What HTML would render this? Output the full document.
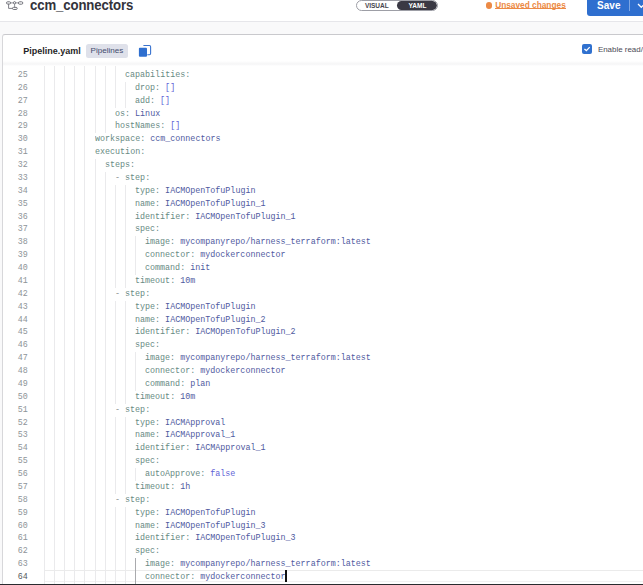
<!DOCTYPE html>
<html><head><meta charset="utf-8">
<style>
html,body{margin:0;padding:0}
body{width:643px;height:585px;overflow:hidden;position:relative;background:#fff;font-family:"Liberation Sans",sans-serif}
.abs{position:absolute}
#hdr{position:absolute;left:0;top:0;width:643px;height:21px;background:#fff;border-bottom:1px solid #e6e6ea}
#sub{position:absolute;left:0;top:22px;width:643px;height:600px;background:#f9f9fa}
#title{position:absolute;left:30.3px;top:-3.2px;font-size:14.2px;letter-spacing:-0.13px;transform:scaleX(0.9296);transform-origin:0 0;font-weight:bold;color:#33333b;line-height:17px;white-space:nowrap}
#tog{position:absolute;left:356px;top:0px;width:80px;height:9px;border:0.8px solid #9d9ea6;border-radius:6px;background:#fff;overflow:hidden}
#tog .on{position:absolute;right:0;top:0;width:40px;height:9px;background:#3a3944;border-radius:6px}
#tog span{position:absolute;top:0.05px;font-size:6.5px;font-weight:bold;line-height:9px}
#dot{position:absolute;left:485.9px;top:2.3px;width:6.6px;height:6.6px;border-radius:50%;background:#ec8a45}
#uns{position:absolute;left:495.2px;top:0.1px;font-size:8.3px;font-weight:bold;color:#ec8a45;line-height:10px;white-space:nowrap}
#unl{position:absolute;left:495.4px;top:8.4px;width:70.4px;height:0.9px;background:#ec8a45}
#save{position:absolute;left:587px;top:-4px;width:70px;height:19.5px;border-radius:3px;background:#2f6fcf}
#save span{position:absolute;left:10.1px;top:4.1px;font-size:10px;font-weight:bold;color:#fff;line-height:11px}
#save i{position:absolute;left:42px;top:4px;width:1px;height:10.8px;background:#7ea6e4}
#card{position:absolute;left:2px;top:33.8px;width:700px;height:600px;border:1px solid #d7d7da;border-top-color:#c9c9cd;border-radius:3px;background:#fff}
#pyaml{position:absolute;left:23.2px;top:44.78px;font-size:9px;font-weight:bold;color:#1f1f26;line-height:12px;white-space:nowrap}
#tag{position:absolute;left:86px;top:44.3px;width:42px;height:13.3px;border-radius:2.5px;background:#dfe1ea}
#tag span{position:absolute;left:4.5px;top:0.1px;font-size:8.1px;color:#444c6e;line-height:13.3px;white-space:nowrap}
#chk{position:absolute;left:582.2px;top:44.3px;width:10px;height:10px;border-radius:2px;background:#3071cf}
#enr{position:absolute;left:597.9px;top:44.6px;font-size:7.95px;color:#4a4b55;line-height:10px;white-space:nowrap}
#edtop{position:absolute;left:3px;top:60.5px;width:643px;height:5.5px;background:linear-gradient(#fff,#f5f5f6 60%,#fff)}
.n{position:absolute;left:0;width:27.7px;text-align:right;font-family:"Liberation Mono",monospace;color:#8d9498;transform-origin:27.7px 0}
.n.cur{color:#545a5e}
.l{position:absolute;font-family:"Liberation Mono",monospace;white-space:pre;transform-origin:0 0}
.d{color:#8a9090}
.k{color:#678a83}
.v{color:#4f5aa0}
.b{color:#5e62d6}
.g{position:absolute;width:1px;background:#eaeaec}
.ga{background:#a9aaad}
.curline{position:absolute;left:44px;width:643px;height:12.6px;border-top:1px solid #ebebeb;border-bottom:1px solid #f1f1f1;box-sizing:border-box}
.cursor{position:absolute;width:1.2px;height:12px;background:#111}
#bot{position:absolute;left:0;top:583.5px;width:643px;height:2px;background:#2a2b2f}

.l,.n{height:12.87px;line-height:12.87px}
.l{font-size:9.30px;transform:scaleX(0.8996)}
.n{font-size:9.8px;transform:scaleX(0.8503)}
.g{height:12.97px}

</style></head><body>
<div id="hdr">
  <svg class="abs" style="left:0;top:0" width="28" height="13" viewBox="0 0 28 13">
    <g fill="none" stroke="#707179" stroke-width="1">
      <rect x="6.5" y="1.8" width="4.1" height="2.2" rx="1.1"/>
      <circle cx="14.55" cy="2.8" r="1.15"/>
      <rect x="18.4" y="1.8" width="4.4" height="2.4" rx="1.2"/>
      <rect x="12.5" y="7.35" width="4.7" height="2.1" rx="1.05"/>
      <path d="M8.6 4V8.4H12.5" stroke-width="0.9"/><path d="M10.6 2.9H13.4M15.7 2.9H18.4M14.6 3.95V7.35" stroke-width="0.75"/>
    </g>
  </svg>
  <div id="title">ccm_connectors</div>
  <div id="tog"><div class="on"></div><span style="left:7.9px;color:#46464e">VISUAL</span><span style="left:51.6px;color:#fff">YAML</span></div>
  <div id="dot"></div><div id="uns">Unsaved changes</div><div id="unl"></div>
  <div id="save"><span>Save</span><i></i>
    <svg class="abs" style="left:49.6px;top:6.6px" width="9" height="6" viewBox="0 0 9 6"><path d="M1 1.0L4.3 4.3L7.6 1.0" fill="none" stroke="#fff" stroke-width="1.25"/></svg>
  </div>
</div>
<div id="sub"></div>
<div id="card"></div>
<div id="pyaml">Pipeline.yaml</div>
<div id="tag"><span>Pipelines</span></div>
<svg class="abs" style="left:137px;top:44px" width="16" height="14" viewBox="0 0 16 14">
  <path d="M6.4 1.5H12.4Q13.6 1.5 13.6 2.7V9.6Q13.6 10.8 12.4 10.8H10.3" fill="none" stroke="#3a73cf" stroke-width="1.1"/>
  <rect x="1.9" y="3.8" width="8.1" height="8.9" rx="1" fill="#2f6fcf"/>
</svg>
<div id="chk"><svg class="abs" style="left:0;top:0" width="10" height="10" viewBox="0 0 10 10"><path d="M2.4 4.9L4.4 6.6L7.7 3.1" fill="none" stroke="#fff" stroke-width="1.3"/></svg></div>
<div id="enr">Enable read/only</div>
<div id="edtop"></div>
<div class="curline" style="top:569.71px"></div><div class="cursor" style="top:570.11px;left:285.46px"></div>
<i class="g" style="left:43.90px;top:66.20px;height:15.77px"></i>
<i class="g" style="left:54.03px;top:66.20px;height:15.77px"></i>
<i class="g" style="left:64.16px;top:66.20px;height:15.77px"></i>
<i class="g" style="left:74.29px;top:66.20px;height:15.77px"></i>
<i class="g" style="left:84.42px;top:66.20px;height:15.77px"></i>
<i class="g" style="left:94.55px;top:66.20px;height:15.77px"></i>
<i class="g" style="left:104.68px;top:66.20px;height:15.77px"></i>
<i class="g" style="left:114.81px;top:66.20px;height:15.77px"></i>
<i class="g" style="left:43.90px;top:81.87px"></i>
<i class="g" style="left:54.03px;top:81.87px"></i>
<i class="g" style="left:64.16px;top:81.87px"></i>
<i class="g" style="left:74.29px;top:81.87px"></i>
<i class="g" style="left:84.42px;top:81.87px"></i>
<i class="g" style="left:94.55px;top:81.87px"></i>
<i class="g" style="left:104.68px;top:81.87px"></i>
<i class="g" style="left:114.81px;top:81.87px"></i>
<i class="g" style="left:124.94px;top:81.87px"></i>
<i class="g" style="left:43.90px;top:94.74px"></i>
<i class="g" style="left:54.03px;top:94.74px"></i>
<i class="g" style="left:64.16px;top:94.74px"></i>
<i class="g" style="left:74.29px;top:94.74px"></i>
<i class="g" style="left:84.42px;top:94.74px"></i>
<i class="g" style="left:94.55px;top:94.74px"></i>
<i class="g" style="left:104.68px;top:94.74px"></i>
<i class="g" style="left:114.81px;top:94.74px"></i>
<i class="g" style="left:124.94px;top:94.74px"></i>
<i class="g" style="left:43.90px;top:107.62px"></i>
<i class="g" style="left:54.03px;top:107.62px"></i>
<i class="g" style="left:64.16px;top:107.62px"></i>
<i class="g" style="left:74.29px;top:107.62px"></i>
<i class="g" style="left:84.42px;top:107.62px"></i>
<i class="g" style="left:94.55px;top:107.62px"></i>
<i class="g" style="left:104.68px;top:107.62px"></i>
<i class="g" style="left:43.90px;top:120.49px"></i>
<i class="g" style="left:54.03px;top:120.49px"></i>
<i class="g" style="left:64.16px;top:120.49px"></i>
<i class="g" style="left:74.29px;top:120.49px"></i>
<i class="g" style="left:84.42px;top:120.49px"></i>
<i class="g" style="left:94.55px;top:120.49px"></i>
<i class="g" style="left:104.68px;top:120.49px"></i>
<i class="g" style="left:43.90px;top:133.36px"></i>
<i class="g" style="left:54.03px;top:133.36px"></i>
<i class="g" style="left:64.16px;top:133.36px"></i>
<i class="g" style="left:74.29px;top:133.36px"></i>
<i class="g" style="left:84.42px;top:133.36px"></i>
<i class="g" style="left:43.90px;top:146.23px"></i>
<i class="g" style="left:54.03px;top:146.23px"></i>
<i class="g" style="left:64.16px;top:146.23px"></i>
<i class="g" style="left:74.29px;top:146.23px"></i>
<i class="g" style="left:84.42px;top:146.23px"></i>
<i class="g" style="left:43.90px;top:159.10px"></i>
<i class="g" style="left:54.03px;top:159.10px"></i>
<i class="g" style="left:64.16px;top:159.10px"></i>
<i class="g" style="left:74.29px;top:159.10px"></i>
<i class="g" style="left:84.42px;top:159.10px"></i>
<i class="g" style="left:94.55px;top:159.10px"></i>
<i class="g" style="left:43.90px;top:171.98px"></i>
<i class="g" style="left:54.03px;top:171.98px"></i>
<i class="g" style="left:64.16px;top:171.98px"></i>
<i class="g" style="left:74.29px;top:171.98px"></i>
<i class="g" style="left:84.42px;top:171.98px"></i>
<i class="g" style="left:94.55px;top:171.98px"></i>
<i class="g" style="left:104.68px;top:171.98px"></i>
<i class="g" style="left:43.90px;top:184.85px"></i>
<i class="g" style="left:54.03px;top:184.85px"></i>
<i class="g" style="left:64.16px;top:184.85px"></i>
<i class="g" style="left:74.29px;top:184.85px"></i>
<i class="g" style="left:84.42px;top:184.85px"></i>
<i class="g" style="left:94.55px;top:184.85px"></i>
<i class="g" style="left:104.68px;top:184.85px"></i>
<i class="g" style="left:114.81px;top:184.85px"></i>
<i class="g" style="left:124.94px;top:184.85px"></i>
<i class="g" style="left:43.90px;top:197.72px"></i>
<i class="g" style="left:54.03px;top:197.72px"></i>
<i class="g" style="left:64.16px;top:197.72px"></i>
<i class="g" style="left:74.29px;top:197.72px"></i>
<i class="g" style="left:84.42px;top:197.72px"></i>
<i class="g" style="left:94.55px;top:197.72px"></i>
<i class="g" style="left:104.68px;top:197.72px"></i>
<i class="g" style="left:114.81px;top:197.72px"></i>
<i class="g" style="left:124.94px;top:197.72px"></i>
<i class="g" style="left:43.90px;top:210.59px"></i>
<i class="g" style="left:54.03px;top:210.59px"></i>
<i class="g" style="left:64.16px;top:210.59px"></i>
<i class="g" style="left:74.29px;top:210.59px"></i>
<i class="g" style="left:84.42px;top:210.59px"></i>
<i class="g" style="left:94.55px;top:210.59px"></i>
<i class="g" style="left:104.68px;top:210.59px"></i>
<i class="g" style="left:114.81px;top:210.59px"></i>
<i class="g" style="left:124.94px;top:210.59px"></i>
<i class="g" style="left:43.90px;top:223.46px"></i>
<i class="g" style="left:54.03px;top:223.46px"></i>
<i class="g" style="left:64.16px;top:223.46px"></i>
<i class="g" style="left:74.29px;top:223.46px"></i>
<i class="g" style="left:84.42px;top:223.46px"></i>
<i class="g" style="left:94.55px;top:223.46px"></i>
<i class="g" style="left:104.68px;top:223.46px"></i>
<i class="g" style="left:114.81px;top:223.46px"></i>
<i class="g" style="left:124.94px;top:223.46px"></i>
<i class="g" style="left:43.90px;top:236.34px"></i>
<i class="g" style="left:54.03px;top:236.34px"></i>
<i class="g" style="left:64.16px;top:236.34px"></i>
<i class="g" style="left:74.29px;top:236.34px"></i>
<i class="g" style="left:84.42px;top:236.34px"></i>
<i class="g" style="left:94.55px;top:236.34px"></i>
<i class="g" style="left:104.68px;top:236.34px"></i>
<i class="g" style="left:114.81px;top:236.34px"></i>
<i class="g" style="left:124.94px;top:236.34px"></i>
<i class="g" style="left:135.07px;top:236.34px"></i>
<i class="g" style="left:43.90px;top:249.21px"></i>
<i class="g" style="left:54.03px;top:249.21px"></i>
<i class="g" style="left:64.16px;top:249.21px"></i>
<i class="g" style="left:74.29px;top:249.21px"></i>
<i class="g" style="left:84.42px;top:249.21px"></i>
<i class="g" style="left:94.55px;top:249.21px"></i>
<i class="g" style="left:104.68px;top:249.21px"></i>
<i class="g" style="left:114.81px;top:249.21px"></i>
<i class="g" style="left:124.94px;top:249.21px"></i>
<i class="g" style="left:135.07px;top:249.21px"></i>
<i class="g" style="left:43.90px;top:262.08px"></i>
<i class="g" style="left:54.03px;top:262.08px"></i>
<i class="g" style="left:64.16px;top:262.08px"></i>
<i class="g" style="left:74.29px;top:262.08px"></i>
<i class="g" style="left:84.42px;top:262.08px"></i>
<i class="g" style="left:94.55px;top:262.08px"></i>
<i class="g" style="left:104.68px;top:262.08px"></i>
<i class="g" style="left:114.81px;top:262.08px"></i>
<i class="g" style="left:124.94px;top:262.08px"></i>
<i class="g" style="left:135.07px;top:262.08px"></i>
<i class="g" style="left:43.90px;top:274.95px"></i>
<i class="g" style="left:54.03px;top:274.95px"></i>
<i class="g" style="left:64.16px;top:274.95px"></i>
<i class="g" style="left:74.29px;top:274.95px"></i>
<i class="g" style="left:84.42px;top:274.95px"></i>
<i class="g" style="left:94.55px;top:274.95px"></i>
<i class="g" style="left:104.68px;top:274.95px"></i>
<i class="g" style="left:114.81px;top:274.95px"></i>
<i class="g" style="left:124.94px;top:274.95px"></i>
<i class="g" style="left:43.90px;top:287.82px"></i>
<i class="g" style="left:54.03px;top:287.82px"></i>
<i class="g" style="left:64.16px;top:287.82px"></i>
<i class="g" style="left:74.29px;top:287.82px"></i>
<i class="g" style="left:84.42px;top:287.82px"></i>
<i class="g" style="left:94.55px;top:287.82px"></i>
<i class="g" style="left:104.68px;top:287.82px"></i>
<i class="g" style="left:43.90px;top:300.70px"></i>
<i class="g" style="left:54.03px;top:300.70px"></i>
<i class="g" style="left:64.16px;top:300.70px"></i>
<i class="g" style="left:74.29px;top:300.70px"></i>
<i class="g" style="left:84.42px;top:300.70px"></i>
<i class="g" style="left:94.55px;top:300.70px"></i>
<i class="g" style="left:104.68px;top:300.70px"></i>
<i class="g" style="left:114.81px;top:300.70px"></i>
<i class="g" style="left:124.94px;top:300.70px"></i>
<i class="g" style="left:43.90px;top:313.57px"></i>
<i class="g" style="left:54.03px;top:313.57px"></i>
<i class="g" style="left:64.16px;top:313.57px"></i>
<i class="g" style="left:74.29px;top:313.57px"></i>
<i class="g" style="left:84.42px;top:313.57px"></i>
<i class="g" style="left:94.55px;top:313.57px"></i>
<i class="g" style="left:104.68px;top:313.57px"></i>
<i class="g" style="left:114.81px;top:313.57px"></i>
<i class="g" style="left:124.94px;top:313.57px"></i>
<i class="g" style="left:43.90px;top:326.44px"></i>
<i class="g" style="left:54.03px;top:326.44px"></i>
<i class="g" style="left:64.16px;top:326.44px"></i>
<i class="g" style="left:74.29px;top:326.44px"></i>
<i class="g" style="left:84.42px;top:326.44px"></i>
<i class="g" style="left:94.55px;top:326.44px"></i>
<i class="g" style="left:104.68px;top:326.44px"></i>
<i class="g" style="left:114.81px;top:326.44px"></i>
<i class="g" style="left:124.94px;top:326.44px"></i>
<i class="g" style="left:43.90px;top:339.31px"></i>
<i class="g" style="left:54.03px;top:339.31px"></i>
<i class="g" style="left:64.16px;top:339.31px"></i>
<i class="g" style="left:74.29px;top:339.31px"></i>
<i class="g" style="left:84.42px;top:339.31px"></i>
<i class="g" style="left:94.55px;top:339.31px"></i>
<i class="g" style="left:104.68px;top:339.31px"></i>
<i class="g" style="left:114.81px;top:339.31px"></i>
<i class="g" style="left:124.94px;top:339.31px"></i>
<i class="g" style="left:43.90px;top:352.18px"></i>
<i class="g" style="left:54.03px;top:352.18px"></i>
<i class="g" style="left:64.16px;top:352.18px"></i>
<i class="g" style="left:74.29px;top:352.18px"></i>
<i class="g" style="left:84.42px;top:352.18px"></i>
<i class="g" style="left:94.55px;top:352.18px"></i>
<i class="g" style="left:104.68px;top:352.18px"></i>
<i class="g" style="left:114.81px;top:352.18px"></i>
<i class="g" style="left:124.94px;top:352.18px"></i>
<i class="g" style="left:135.07px;top:352.18px"></i>
<i class="g" style="left:43.90px;top:365.06px"></i>
<i class="g" style="left:54.03px;top:365.06px"></i>
<i class="g" style="left:64.16px;top:365.06px"></i>
<i class="g" style="left:74.29px;top:365.06px"></i>
<i class="g" style="left:84.42px;top:365.06px"></i>
<i class="g" style="left:94.55px;top:365.06px"></i>
<i class="g" style="left:104.68px;top:365.06px"></i>
<i class="g" style="left:114.81px;top:365.06px"></i>
<i class="g" style="left:124.94px;top:365.06px"></i>
<i class="g" style="left:135.07px;top:365.06px"></i>
<i class="g" style="left:43.90px;top:377.93px"></i>
<i class="g" style="left:54.03px;top:377.93px"></i>
<i class="g" style="left:64.16px;top:377.93px"></i>
<i class="g" style="left:74.29px;top:377.93px"></i>
<i class="g" style="left:84.42px;top:377.93px"></i>
<i class="g" style="left:94.55px;top:377.93px"></i>
<i class="g" style="left:104.68px;top:377.93px"></i>
<i class="g" style="left:114.81px;top:377.93px"></i>
<i class="g" style="left:124.94px;top:377.93px"></i>
<i class="g" style="left:135.07px;top:377.93px"></i>
<i class="g" style="left:43.90px;top:390.80px"></i>
<i class="g" style="left:54.03px;top:390.80px"></i>
<i class="g" style="left:64.16px;top:390.80px"></i>
<i class="g" style="left:74.29px;top:390.80px"></i>
<i class="g" style="left:84.42px;top:390.80px"></i>
<i class="g" style="left:94.55px;top:390.80px"></i>
<i class="g" style="left:104.68px;top:390.80px"></i>
<i class="g" style="left:114.81px;top:390.80px"></i>
<i class="g" style="left:124.94px;top:390.80px"></i>
<i class="g" style="left:43.90px;top:403.67px"></i>
<i class="g" style="left:54.03px;top:403.67px"></i>
<i class="g" style="left:64.16px;top:403.67px"></i>
<i class="g" style="left:74.29px;top:403.67px"></i>
<i class="g" style="left:84.42px;top:403.67px"></i>
<i class="g" style="left:94.55px;top:403.67px"></i>
<i class="g" style="left:104.68px;top:403.67px"></i>
<i class="g" style="left:43.90px;top:416.54px"></i>
<i class="g" style="left:54.03px;top:416.54px"></i>
<i class="g" style="left:64.16px;top:416.54px"></i>
<i class="g" style="left:74.29px;top:416.54px"></i>
<i class="g" style="left:84.42px;top:416.54px"></i>
<i class="g" style="left:94.55px;top:416.54px"></i>
<i class="g" style="left:104.68px;top:416.54px"></i>
<i class="g" style="left:114.81px;top:416.54px"></i>
<i class="g" style="left:124.94px;top:416.54px"></i>
<i class="g" style="left:43.90px;top:429.42px"></i>
<i class="g" style="left:54.03px;top:429.42px"></i>
<i class="g" style="left:64.16px;top:429.42px"></i>
<i class="g" style="left:74.29px;top:429.42px"></i>
<i class="g" style="left:84.42px;top:429.42px"></i>
<i class="g" style="left:94.55px;top:429.42px"></i>
<i class="g" style="left:104.68px;top:429.42px"></i>
<i class="g" style="left:114.81px;top:429.42px"></i>
<i class="g" style="left:124.94px;top:429.42px"></i>
<i class="g" style="left:43.90px;top:442.29px"></i>
<i class="g" style="left:54.03px;top:442.29px"></i>
<i class="g" style="left:64.16px;top:442.29px"></i>
<i class="g" style="left:74.29px;top:442.29px"></i>
<i class="g" style="left:84.42px;top:442.29px"></i>
<i class="g" style="left:94.55px;top:442.29px"></i>
<i class="g" style="left:104.68px;top:442.29px"></i>
<i class="g" style="left:114.81px;top:442.29px"></i>
<i class="g" style="left:124.94px;top:442.29px"></i>
<i class="g" style="left:43.90px;top:455.16px"></i>
<i class="g" style="left:54.03px;top:455.16px"></i>
<i class="g" style="left:64.16px;top:455.16px"></i>
<i class="g" style="left:74.29px;top:455.16px"></i>
<i class="g" style="left:84.42px;top:455.16px"></i>
<i class="g" style="left:94.55px;top:455.16px"></i>
<i class="g" style="left:104.68px;top:455.16px"></i>
<i class="g" style="left:114.81px;top:455.16px"></i>
<i class="g" style="left:124.94px;top:455.16px"></i>
<i class="g" style="left:43.90px;top:468.03px"></i>
<i class="g" style="left:54.03px;top:468.03px"></i>
<i class="g" style="left:64.16px;top:468.03px"></i>
<i class="g" style="left:74.29px;top:468.03px"></i>
<i class="g" style="left:84.42px;top:468.03px"></i>
<i class="g" style="left:94.55px;top:468.03px"></i>
<i class="g" style="left:104.68px;top:468.03px"></i>
<i class="g" style="left:114.81px;top:468.03px"></i>
<i class="g" style="left:124.94px;top:468.03px"></i>
<i class="g" style="left:135.07px;top:468.03px"></i>
<i class="g" style="left:43.90px;top:480.90px"></i>
<i class="g" style="left:54.03px;top:480.90px"></i>
<i class="g" style="left:64.16px;top:480.90px"></i>
<i class="g" style="left:74.29px;top:480.90px"></i>
<i class="g" style="left:84.42px;top:480.90px"></i>
<i class="g" style="left:94.55px;top:480.90px"></i>
<i class="g" style="left:104.68px;top:480.90px"></i>
<i class="g" style="left:114.81px;top:480.90px"></i>
<i class="g" style="left:124.94px;top:480.90px"></i>
<i class="g" style="left:43.90px;top:493.78px"></i>
<i class="g" style="left:54.03px;top:493.78px"></i>
<i class="g" style="left:64.16px;top:493.78px"></i>
<i class="g" style="left:74.29px;top:493.78px"></i>
<i class="g" style="left:84.42px;top:493.78px"></i>
<i class="g" style="left:94.55px;top:493.78px"></i>
<i class="g" style="left:104.68px;top:493.78px"></i>
<i class="g" style="left:43.90px;top:506.65px"></i>
<i class="g" style="left:54.03px;top:506.65px"></i>
<i class="g" style="left:64.16px;top:506.65px"></i>
<i class="g" style="left:74.29px;top:506.65px"></i>
<i class="g" style="left:84.42px;top:506.65px"></i>
<i class="g" style="left:94.55px;top:506.65px"></i>
<i class="g" style="left:104.68px;top:506.65px"></i>
<i class="g" style="left:114.81px;top:506.65px"></i>
<i class="g" style="left:124.94px;top:506.65px"></i>
<i class="g" style="left:43.90px;top:519.52px"></i>
<i class="g" style="left:54.03px;top:519.52px"></i>
<i class="g" style="left:64.16px;top:519.52px"></i>
<i class="g" style="left:74.29px;top:519.52px"></i>
<i class="g" style="left:84.42px;top:519.52px"></i>
<i class="g" style="left:94.55px;top:519.52px"></i>
<i class="g" style="left:104.68px;top:519.52px"></i>
<i class="g" style="left:114.81px;top:519.52px"></i>
<i class="g" style="left:124.94px;top:519.52px"></i>
<i class="g" style="left:43.90px;top:532.39px"></i>
<i class="g" style="left:54.03px;top:532.39px"></i>
<i class="g" style="left:64.16px;top:532.39px"></i>
<i class="g" style="left:74.29px;top:532.39px"></i>
<i class="g" style="left:84.42px;top:532.39px"></i>
<i class="g" style="left:94.55px;top:532.39px"></i>
<i class="g" style="left:104.68px;top:532.39px"></i>
<i class="g" style="left:114.81px;top:532.39px"></i>
<i class="g" style="left:124.94px;top:532.39px"></i>
<i class="g" style="left:43.90px;top:545.26px"></i>
<i class="g" style="left:54.03px;top:545.26px"></i>
<i class="g" style="left:64.16px;top:545.26px"></i>
<i class="g" style="left:74.29px;top:545.26px"></i>
<i class="g" style="left:84.42px;top:545.26px"></i>
<i class="g" style="left:94.55px;top:545.26px"></i>
<i class="g" style="left:104.68px;top:545.26px"></i>
<i class="g" style="left:114.81px;top:545.26px"></i>
<i class="g" style="left:124.94px;top:545.26px"></i>
<i class="g" style="left:43.90px;top:558.14px"></i>
<i class="g" style="left:54.03px;top:558.14px"></i>
<i class="g" style="left:64.16px;top:558.14px"></i>
<i class="g" style="left:74.29px;top:558.14px"></i>
<i class="g" style="left:84.42px;top:558.14px"></i>
<i class="g" style="left:94.55px;top:558.14px"></i>
<i class="g" style="left:104.68px;top:558.14px"></i>
<i class="g" style="left:114.81px;top:558.14px"></i>
<i class="g" style="left:124.94px;top:558.14px"></i>
<i class="g ga" style="left:135.07px;top:558.14px"></i>
<i class="g" style="left:43.90px;top:571.01px"></i>
<i class="g" style="left:54.03px;top:571.01px"></i>
<i class="g" style="left:64.16px;top:571.01px"></i>
<i class="g" style="left:74.29px;top:571.01px"></i>
<i class="g" style="left:84.42px;top:571.01px"></i>
<i class="g" style="left:94.55px;top:571.01px"></i>
<i class="g" style="left:104.68px;top:571.01px"></i>
<i class="g" style="left:114.81px;top:571.01px"></i>
<i class="g" style="left:124.94px;top:571.01px"></i>
<i class="g ga" style="left:135.07px;top:571.01px"></i>
<div class="n" style="top:69.00px">25</div>
<div class="l" style="top:69.00px;left:125.12px"><span class="k">capabilities:</span></div>
<div class="n" style="top:81.87px">26</div>
<div class="l" style="top:81.87px;left:135.16px"><span class="k">drop:&#160;</span><span class="b">[]</span></div>
<div class="n" style="top:94.74px">27</div>
<div class="l" style="top:94.74px;left:135.16px"><span class="k">add:&#160;</span><span class="b">[]</span></div>
<div class="n" style="top:107.62px">28</div>
<div class="l" style="top:107.62px;left:115.08px"><span class="k">os:&#160;</span><span class="v">Linux</span></div>
<div class="n" style="top:120.49px">29</div>
<div class="l" style="top:120.49px;left:115.08px"><span class="k">hostNames:&#160;</span><span class="b">[]</span></div>
<div class="n" style="top:133.36px">30</div>
<div class="l" style="top:133.36px;left:95.00px"><span class="k">workspace:&#160;</span><span class="v">ccm_connectors</span></div>
<div class="n" style="top:146.23px">31</div>
<div class="l" style="top:146.23px;left:95.00px"><span class="k">execution:</span></div>
<div class="n" style="top:159.10px">32</div>
<div class="l" style="top:159.10px;left:105.04px"><span class="k">steps:</span></div>
<div class="n" style="top:171.98px">33</div>
<div class="l" style="top:171.98px;left:115.08px"><span class="d">-&#160;</span><span class="k">step:</span></div>
<div class="n" style="top:184.85px">34</div>
<div class="l" style="top:184.85px;left:135.16px"><span class="k">type:&#160;</span><span class="v">IACMOpenTofuPlugin</span></div>
<div class="n" style="top:197.72px">35</div>
<div class="l" style="top:197.72px;left:135.16px"><span class="k">name:&#160;</span><span class="v">IACMOpenTofuPlugin_1</span></div>
<div class="n" style="top:210.59px">36</div>
<div class="l" style="top:210.59px;left:135.16px"><span class="k">identifier:&#160;</span><span class="v">IACMOpenTofuPlugin_1</span></div>
<div class="n" style="top:223.46px">37</div>
<div class="l" style="top:223.46px;left:135.16px"><span class="k">spec:</span></div>
<div class="n" style="top:236.34px">38</div>
<div class="l" style="top:236.34px;left:145.20px"><span class="k">image:&#160;</span><span class="v">mycompanyrepo/harness_terraform:latest</span></div>
<div class="n" style="top:249.21px">39</div>
<div class="l" style="top:249.21px;left:145.20px"><span class="k">connector:&#160;</span><span class="v">mydockerconnector</span></div>
<div class="n" style="top:262.08px">40</div>
<div class="l" style="top:262.08px;left:145.20px"><span class="k">command:&#160;</span><span class="v">init</span></div>
<div class="n" style="top:274.95px">41</div>
<div class="l" style="top:274.95px;left:135.16px"><span class="k">timeout:&#160;</span><span class="v">10m</span></div>
<div class="n" style="top:287.82px">42</div>
<div class="l" style="top:287.82px;left:115.08px"><span class="d">-&#160;</span><span class="k">step:</span></div>
<div class="n" style="top:300.70px">43</div>
<div class="l" style="top:300.70px;left:135.16px"><span class="k">type:&#160;</span><span class="v">IACMOpenTofuPlugin</span></div>
<div class="n" style="top:313.57px">44</div>
<div class="l" style="top:313.57px;left:135.16px"><span class="k">name:&#160;</span><span class="v">IACMOpenTofuPlugin_2</span></div>
<div class="n" style="top:326.44px">45</div>
<div class="l" style="top:326.44px;left:135.16px"><span class="k">identifier:&#160;</span><span class="v">IACMOpenTofuPlugin_2</span></div>
<div class="n" style="top:339.31px">46</div>
<div class="l" style="top:339.31px;left:135.16px"><span class="k">spec:</span></div>
<div class="n" style="top:352.18px">47</div>
<div class="l" style="top:352.18px;left:145.20px"><span class="k">image:&#160;</span><span class="v">mycompanyrepo/harness_terraform:latest</span></div>
<div class="n" style="top:365.06px">48</div>
<div class="l" style="top:365.06px;left:145.20px"><span class="k">connector:&#160;</span><span class="v">mydockerconnector</span></div>
<div class="n" style="top:377.93px">49</div>
<div class="l" style="top:377.93px;left:145.20px"><span class="k">command:&#160;</span><span class="v">plan</span></div>
<div class="n" style="top:390.80px">50</div>
<div class="l" style="top:390.80px;left:135.16px"><span class="k">timeout:&#160;</span><span class="v">10m</span></div>
<div class="n" style="top:403.67px">51</div>
<div class="l" style="top:403.67px;left:115.08px"><span class="d">-&#160;</span><span class="k">step:</span></div>
<div class="n" style="top:416.54px">52</div>
<div class="l" style="top:416.54px;left:135.16px"><span class="k">type:&#160;</span><span class="v">IACMApproval</span></div>
<div class="n" style="top:429.42px">53</div>
<div class="l" style="top:429.42px;left:135.16px"><span class="k">name:&#160;</span><span class="v">IACMApproval_1</span></div>
<div class="n" style="top:442.29px">54</div>
<div class="l" style="top:442.29px;left:135.16px"><span class="k">identifier:&#160;</span><span class="v">IACMApproval_1</span></div>
<div class="n" style="top:455.16px">55</div>
<div class="l" style="top:455.16px;left:135.16px"><span class="k">spec:</span></div>
<div class="n" style="top:468.03px">56</div>
<div class="l" style="top:468.03px;left:145.20px"><span class="k">autoApprove:&#160;</span><span class="b">false</span></div>
<div class="n" style="top:480.90px">57</div>
<div class="l" style="top:480.90px;left:135.16px"><span class="k">timeout:&#160;</span><span class="v">1h</span></div>
<div class="n" style="top:493.78px">58</div>
<div class="l" style="top:493.78px;left:115.08px"><span class="d">-&#160;</span><span class="k">step:</span></div>
<div class="n" style="top:506.65px">59</div>
<div class="l" style="top:506.65px;left:135.16px"><span class="k">type:&#160;</span><span class="v">IACMOpenTofuPlugin</span></div>
<div class="n" style="top:519.52px">60</div>
<div class="l" style="top:519.52px;left:135.16px"><span class="k">name:&#160;</span><span class="v">IACMOpenTofuPlugin_3</span></div>
<div class="n" style="top:532.39px">61</div>
<div class="l" style="top:532.39px;left:135.16px"><span class="k">identifier:&#160;</span><span class="v">IACMOpenTofuPlugin_3</span></div>
<div class="n" style="top:545.26px">62</div>
<div class="l" style="top:545.26px;left:135.16px"><span class="k">spec:</span></div>
<div class="n" style="top:558.14px">63</div>
<div class="l" style="top:558.14px;left:145.20px"><span class="k">image:&#160;</span><span class="v">mycompanyrepo/harness_terraform:latest</span></div>
<div class="n cur" style="top:571.01px">64</div>
<div class="l" style="top:571.01px;left:145.20px"><span class="k">connector:&#160;</span><span class="v">mydockerconnector</span></div>
<div id="bot"></div>
</body></html>
